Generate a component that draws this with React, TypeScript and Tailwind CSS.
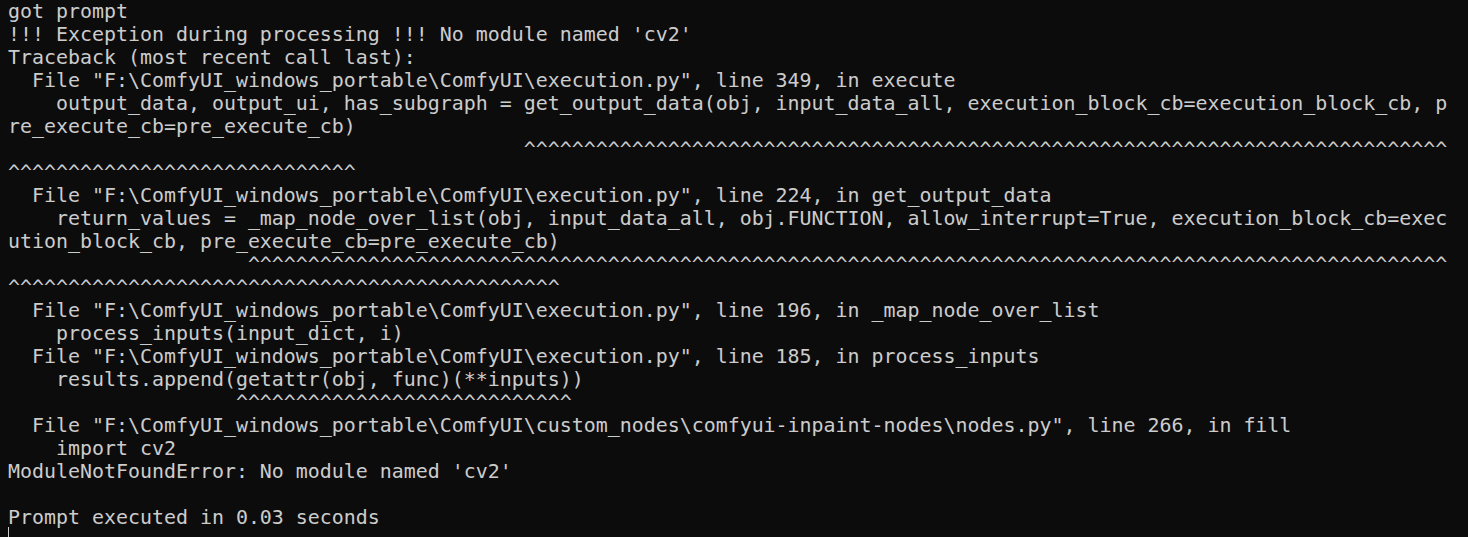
const lines: string[] = [
  "got prompt",
  "!!! Exception during processing !!! No module named 'cv2'",
  "Traceback (most recent call last):",
  '  File "F:\\ComfyUI_windows_portable\\ComfyUI\\execution.py", line 349, in execute',
  "    output_data, output_ui, has_subgraph = get_output_data(obj, input_data_all, execution_block_cb=execution_block_cb, p",
  "re_execute_cb=pre_execute_cb)",
  " ".repeat(43) + "^".repeat(77),
  "^".repeat(29),
  '  File "F:\\ComfyUI_windows_portable\\ComfyUI\\execution.py", line 224, in get_output_data',
  "    return_values = _map_node_over_list(obj, input_data_all, obj.FUNCTION, allow_interrupt=True, execution_block_cb=exec",
  "ution_block_cb, pre_execute_cb=pre_execute_cb)",
  " ".repeat(20) + "^".repeat(100),
  "^".repeat(46),
  '  File "F:\\ComfyUI_windows_portable\\ComfyUI\\execution.py", line 196, in _map_node_over_list',
  "    process_inputs(input_dict, i)",
  '  File "F:\\ComfyUI_windows_portable\\ComfyUI\\execution.py", line 185, in process_inputs',
  "    results.append(getattr(obj, func)(**inputs))",
  " ".repeat(19) + "^".repeat(28),
  '  File "F:\\ComfyUI_windows_portable\\ComfyUI\\custom_nodes\\comfyui-inpaint-nodes\\nodes.py", line 266, in fill',
  "    import cv2",
  "ModuleNotFoundError: No module named 'cv2'",
  "",
  "Prompt executed in 0.03 seconds",
];

export default function App() {
  return (
    <div className="h-[537px] w-full overflow-hidden bg-[#0c0c0c] pl-2 text-[#cccccc]">
      <div className="font-['DejaVu_Sans_Mono',monospace] text-[19.93px] leading-[23px]">
        {lines.map((line, i) => (
          <div key={i} className="h-[23px] whitespace-pre">
            {line}
          </div>
        ))}
        <div className="flex h-[23px] items-start">
          <span className="mt-[-2px] h-[20px] w-px bg-[#cccccc]" />
        </div>
      </div>
    </div>
  );
}
